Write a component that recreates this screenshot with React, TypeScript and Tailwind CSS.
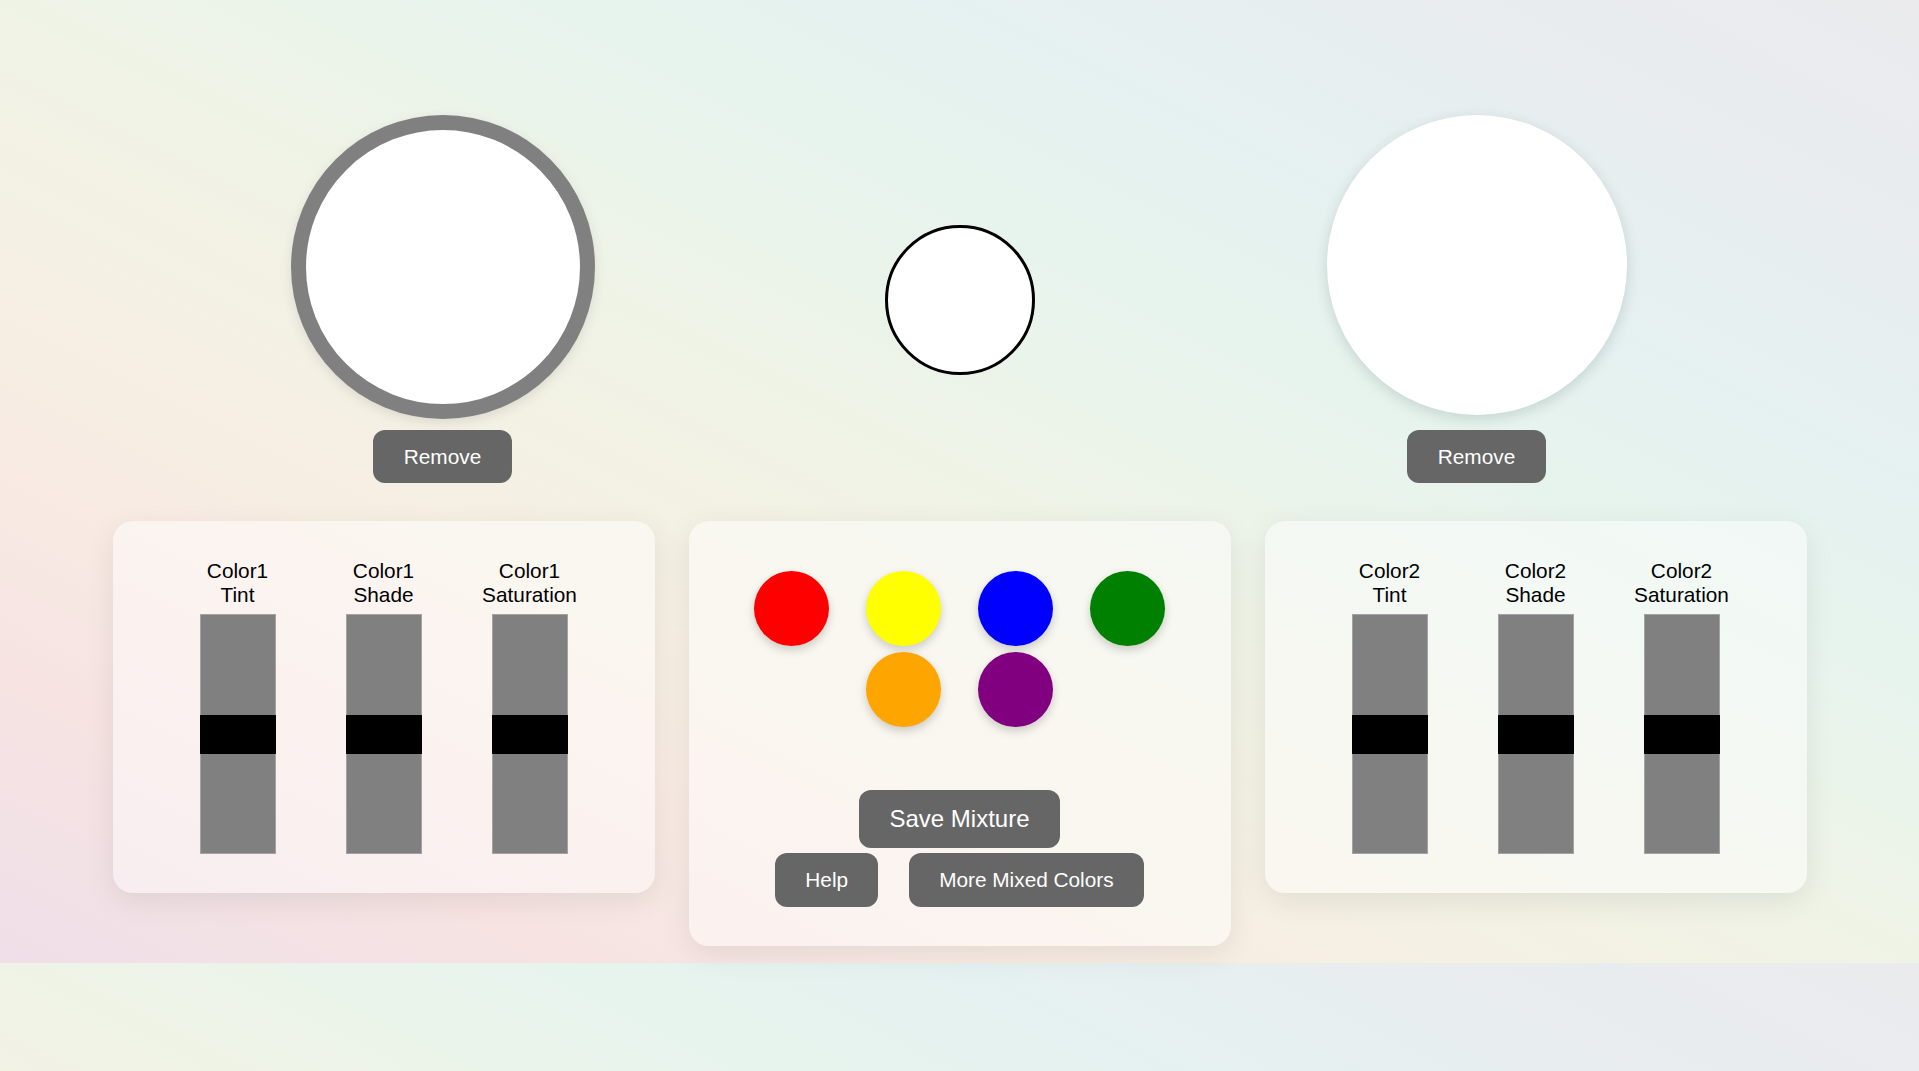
import React from "react";

const swatches = ["#ff0000", "#ffff00", "#0000ff", "#008000", "#ffa500", "#800080"];

function RemoveButton() {
  return (
    <button className="h-[53px] px-[31px] rounded-[12px] bg-[#666666] text-white text-[20.8px] leading-[24px]">
      Remove
    </button>
  );
}

function Slider({ label, prefix }: { label: string; prefix: string }) {
  return (
    <div className="w-[146px] flex flex-col items-center">
      <div className="text-center text-[20.8px] leading-[24px] text-black">
        {prefix}
        <br />
        {label}
      </div>
      <div className="relative mt-[7px] w-[76px] h-[240px] bg-[#808080] border border-[#a3a3a3]">
        {/* thumb sits in the middle of the track */}
        <div className="absolute left-[-1px] right-[-1px] top-[100px] h-[39px] bg-black" />
      </div>
    </div>
  );
}

function SliderPanel({ prefix }: { prefix: string }) {
  return (
    <div className="w-[542px] h-[372px] pt-[38px] rounded-[20px] bg-white/45 shadow-[0_8px_30px_rgba(0,0,0,0.08)] flex justify-center">
      <Slider prefix={prefix} label="Tint" />
      <Slider prefix={prefix} label="Shade" />
      <Slider prefix={prefix} label="Saturation" />
    </div>
  );
}

function MixPanel() {
  return (
    <div className="w-[542px] h-[425px] pt-[50px] rounded-[20px] bg-white/45 shadow-[0_8px_30px_rgba(0,0,0,0.08)] flex flex-col items-center">
      <div className="w-[420px] flex flex-wrap justify-center gap-x-[37px] gap-y-[6px]">
        {swatches.map((c) => (
          <div
            key={c}
            className="w-[75px] h-[75px] rounded-full shadow-[0_4px_10px_rgba(0,0,0,0.18)]"
            style={{ background: c }}
          />
        ))}
      </div>
      <button className="mt-[63px] h-[58px] px-[30px] rounded-[12px] bg-[#666666] text-white text-[24px] leading-[28px]">
        Save Mixture
      </button>
      <div className="mt-[5px] flex gap-[31px]">
        <button className="h-[54px] px-[30px] rounded-[12px] bg-[#666666] text-white text-[20.8px] leading-[24px]">
          Help
        </button>
        <button className="h-[54px] px-[30px] rounded-[12px] bg-[#666666] text-white text-[20.8px] leading-[24px]">
          More Mixed Colors
        </button>
      </div>
    </div>
  );
}

export default function App() {
  return (
    <div className="min-h-screen font-['Liberation_Sans',Arial,sans-serif] bg-[linear-gradient(to_top_right,#efdfe8_0%,#f6e3e2_15%,#f8eae3_25%,#f6efe3_35%,#eff3e6_50%,#e7f4ed_64%,#e5f1f0_75%,#e8edf0_86%,#ebebed_100%)] bg-[length:100%_963px]">
      <div className="pb-[17px]">
        {/* top row: two picked colours and the mix result */}
        <div className="pt-[115px] flex justify-center items-start">
          <div className="w-[517px] flex flex-col items-center">
            <div className="mt-[2px] w-[300px] h-[300px] rounded-full bg-white border-[13px] border-[#808080] shadow-[0_0_0_2px_#808080,0_4px_14px_rgba(0,0,0,0.12)]" />
            <div className="mt-[13px]">
              <RemoveButton />
            </div>
          </div>
          <div className="w-[517px] flex justify-center pt-[110px]">
            <div className="w-[150px] h-[150px] rounded-full bg-white border-[3px] border-black" />
          </div>
          <div className="w-[517px] flex flex-col items-center">
            <div className="w-[300px] h-[300px] rounded-full bg-white shadow-[0_4px_14px_rgba(0,40,40,0.15)]" />
            <div className="mt-[15px]">
              <RemoveButton />
            </div>
          </div>
        </div>

        <div className="mt-[38px] flex justify-center items-start gap-[34px]">
          <SliderPanel prefix="Color1" />
          <MixPanel />
          <SliderPanel prefix="Color2" />
        </div>
      </div>
    </div>
  );
}
